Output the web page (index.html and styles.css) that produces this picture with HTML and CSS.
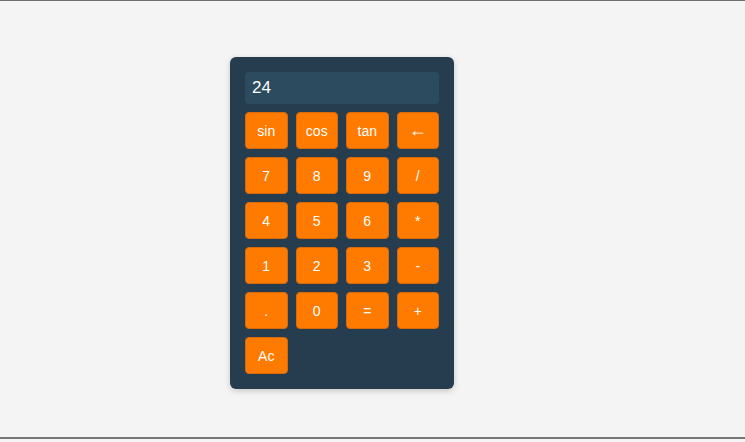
FILE: index.html
```html
<!DOCTYPE html>
<html>
<head>
<meta charset="utf-8">
<link rel="stylesheet" href="styles.css">
</head>
<body>
<div class="page">
  <div class="calc">
    <div class="display">24</div>
    <div class="keys">
      <button class="key">sin</button>
      <button class="key">cos</button>
      <button class="key">tan</button>
      <button class="key arrow">←</button>
      <button class="key">7</button>
      <button class="key">8</button>
      <button class="key">9</button>
      <button class="key">/</button>
      <button class="key">4</button>
      <button class="key">5</button>
      <button class="key">6</button>
      <button class="key">*</button>
      <button class="key">1</button>
      <button class="key">2</button>
      <button class="key">3</button>
      <button class="key">-</button>
      <button class="key">.</button>
      <button class="key">0</button>
      <button class="key">=</button>
      <button class="key">+</button>
      <button class="key">Ac</button>
    </div>
  </div>
</div>
</body>
</html>
```
FILE: styles.css
```css
html, body {
  margin: 0;
  padding: 0;
  background: #f4f4f4;
  font-family: "Liberation Sans", Arial, sans-serif;
}
.page {
  height: 436px;
  border-top: 1px solid #707070;
  border-bottom: 2px solid #777777;
  padding: 56px 0 0 230px;
  box-sizing: border-box;
  height: 439px;
}
.calc {
  width: 224px;
  box-sizing: border-box;
  padding: 15px;
  background: #263d50;
  border-radius: 6px;
  box-shadow: 0 2px 6px rgba(0, 0, 0, 0.18);
}
.display {
  height: 32px;
  box-sizing: border-box;
  background: #2c4b5f;
  border-radius: 4px;
  color: #ffffff;
  font-size: 17px;
  line-height: 32px;
  padding: 0 7px;
  margin-bottom: 8px;
}
.keys {
  display: grid;
  grid-template-columns: repeat(4, 1fr);
  grid-auto-rows: 37px;
  gap: 8px;
}
.key {
  margin: 0;
  padding: 0;
  background: #ff7b00;
  border: 1px solid #d96a0a;
  border-radius: 4px;
  color: #ffffff;
  font-family: "Liberation Sans", Arial, sans-serif;
  font-size: 14px;
}
.key.arrow {
  font-size: 18px;
}
```
